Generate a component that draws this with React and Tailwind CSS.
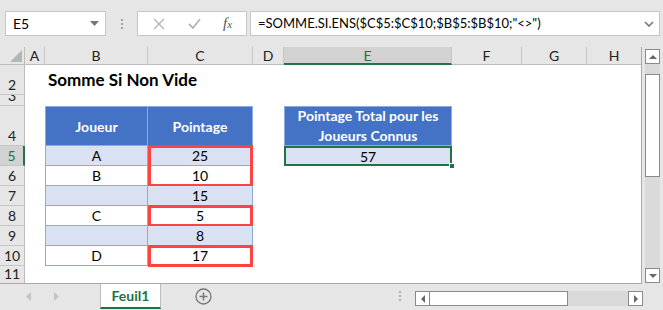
import React from 'react';

const font = { fontFamily: 'Lato, "Open Sans", sans-serif' };

const cols = ['A', 'B', 'C', 'D', 'E', 'F', 'G', 'H'];
const rowNums = [2, 3, 4, 5, 6, 7, 8, 9, 10, 11];

const rowStart = ['row-start-2', 'row-start-3', 'row-start-4', 'row-start-5', 'row-start-6', 'row-start-7', 'row-start-8', 'row-start-9', 'row-start-10', 'row-start-11'];
const colStart = ['col-start-2', 'col-start-3', 'col-start-4', 'col-start-5', 'col-start-6', 'col-start-7', 'col-start-8', 'col-start-9'];

const data = [
    { joueur: 'A', score: 25, band: true },
    { joueur: 'B', score: 10, band: false },
    { joueur: '', score: 15, band: true },
    { joueur: 'C', score: 5, band: false },
    { joueur: '', score: 8, band: true },
    { joueur: 'D', score: 17, band: false },
];

// rows whose score is counted get the red frame
const redRows = [5, 6, 8, 10];

const FormulaBar = () => (
    <div className="h-[47px] bg-[#e6e6e6] flex items-start pt-[11px] pl-[5px]">
        <div className="w-[101px] h-[25px] bg-white border border-[#c6c6c6] flex items-center justify-between pl-[7px] pr-[6px] text-[14px] text-black">
            <span>E5</span>
            <svg width="9" height="5" viewBox="0 0 9 5"><path d="M0 0h9L4.5 5z" fill="#777" /></svg>
        </div>
        <div className="w-[31px] h-[25px] flex flex-col items-center justify-center gap-[2px]">
            <span className="w-[2px] h-[2px] bg-[#a6a6a6]" />
            <span className="w-[2px] h-[2px] bg-[#a6a6a6]" />
            <span className="w-[2px] h-[2px] bg-[#a6a6a6]" />
        </div>
        <div className="w-[110px] h-[25px] bg-white border border-[#c6c6c6] flex items-center">
            <svg className="ml-[15px]" width="12" height="12" viewBox="0 0 12 12">
                <path d="M1 1l10 10M11 1L1 11" stroke="#b5b5b5" strokeWidth="1.4" />
            </svg>
            <svg className="ml-[23px]" width="13" height="11" viewBox="0 0 13 11">
                <path d="M1 6l4 4 7-9" stroke="#b5b5b5" strokeWidth="1.8" fill="none" />
            </svg>
            <span className="ml-[22px] text-[15px] italic text-[#555]" style={{ fontFamily: '"Liberation Serif", serif' }}>
                f<span className="text-[11px]">x</span>
            </span>
        </div>
        <div className="ml-[3px] flex-1 mr-[3px] h-[25px] bg-white border border-[#c6c6c6] flex items-center justify-between pl-[7px] pr-[5px] text-[13px] text-black whitespace-nowrap">
            <span>=SOMME.SI.ENS($C$5:$C$10;$B$5:$B$10;"&lt;&gt;")</span>
            <svg width="10" height="6" viewBox="0 0 10 6"><path d="M1 1l4 4 4-4" stroke="#777" strokeWidth="1.6" fill="none" /></svg>
        </div>
    </div>
);

const ScrollButton = ({ dir }) => {
    const paths = {
        up: 'M1 5h8L5 1z',
        down: 'M1 1h8L5 5z',
        left: 'M5 1v8L1 5z',
        right: 'M1 1v8l4-4z',
    };
    const horizontal = dir === 'left' || dir === 'right';
    return (
        <div className="w-[15px] h-[15px] bg-white border border-[#8a8a8a] flex items-center justify-center shrink-0">
            <svg width={horizontal ? 6 : 10} height={horizontal ? 10 : 6} viewBox={horizontal ? '0 0 6 10' : '0 0 10 6'}>
                <path d={paths[dir]} fill="#666" />
            </svg>
        </div>
    );
};

const Sheet = () => {
    const tblBorder = 'border-[#8ea9db]';
    return (
        <div className="relative w-[642px] h-[237px] bg-white border-r border-b border-[#aaaaaa] grid grid-cols-[25px_20px_103px_105px_31px_168px_70px_65px_55px] grid-rows-[18px_30px_11px_40px_20px_20px_20px_20px_20px_20px_18px] overflow-hidden">
            {/* corner */}
            <div className="col-start-1 row-start-1 bg-[#e6e6e6] border-r border-b border-[#bdbdbd] flex items-end justify-end p-[2px]">
                <svg width="12" height="12" viewBox="0 0 12 12"><path d="M12 0v12H0z" fill="#b5b5b5" /></svg>
            </div>
            {/* column headers */}
            {cols.map((c, i) => (
                <div
                    key={c}
                    className={`${colStart[i]} row-start-1 flex items-center justify-center text-[14px] ${c === 'E'
                        ? 'bg-[#d2d2d2] text-[#217346] border-b-2 border-b-[#217346] border-r border-r-[#c6c6c6]'
                        : 'bg-[#e6e6e6] text-[#222] border-b border-b-[#bdbdbd] border-r border-r-[#c6c6c6]'
                        }`}
                >
                    {c}
                </div>
            ))}
            {/* row headers */}
            {rowNums.map((n, i) => (
                <div
                    key={n}
                    className={`col-start-1 ${rowStart[i]} flex items-end justify-center text-[14px] leading-[18px] overflow-hidden ${n === 5
                        ? 'bg-[#d2d2d2] text-[#217346] border-r-2 border-r-[#217346] border-b border-b-[#c6c6c6]'
                        : 'bg-[#e6e6e6] text-[#222] border-r border-r-[#bdbdbd] border-b border-b-[#c6c6c6]'
                        }`}
                >
                    {n}
                </div>
            ))}

            {/* title */}
            <div className="col-start-3 col-span-2 row-start-2 flex items-end pl-[3px] pb-[3px] text-[17px] font-bold text-black whitespace-nowrap">
                Somme Si Non Vide
            </div>

            {/* table header */}
            <div className={`col-start-3 row-start-4 bg-[#4472c4] border-l border-t border-r border-b ${tblBorder} flex items-center justify-center text-white font-bold text-[14px]`}>
                Joueur
            </div>
            <div className={`col-start-4 row-start-4 bg-[#4472c4] border-t border-r border-b ${tblBorder} flex items-center justify-center text-white font-bold text-[14px]`}>
                Pointage
            </div>

            {data.map((d, i) => {
                const r = rowStart[i + 3];
                const bg = d.band ? 'bg-[#d9e1f2]' : 'bg-white';
                const framed = redRows.includes(i + 5);
                return (
                    <React.Fragment key={i}>
                        <div className={`col-start-3 ${r} ${bg} border-l border-r border-b ${tblBorder} flex items-center justify-center text-[14px] text-black`}>
                            {d.joueur}
                        </div>
                        <div className={`relative col-start-4 ${r} ${bg} border-r border-b ${tblBorder} flex items-center justify-center text-[14px] text-black`}>
                            {d.score}
                            {framed && (
                                <div
                                    className={`absolute left-0 right-[-1px] border-[#ff4242] ${i === 0
                                        ? 'top-[-1px] bottom-[-1px] border-t-[3px] border-l-[3px] border-r-[3px]'
                                        : i === 1
                                            ? 'top-[-1px] bottom-[-2px] border-b-[3px] border-l-[3px] border-r-[3px]'
                                            : 'top-[-1px] bottom-[-2px] border-[3px]'
                                        }`}
                                />
                            )}
                        </div>
                    </React.Fragment>
                );
            })}

            {/* result */}
            <div className={`col-start-6 row-start-4 bg-[#4472c4] border ${tblBorder} flex items-center justify-center text-center text-white font-bold text-[14px] leading-[20px]`}>
                Pointage Total pour les<br />Joueurs Connus
            </div>
            <div className="relative col-start-6 row-start-5 bg-[#d9e1f2] flex items-center justify-center text-[14px] text-black">
                57
                <div className="absolute inset-0 border-2 border-[#217346]" />
                <div className="absolute right-[-3px] bottom-[-3px] w-[6px] h-[6px] bg-[#217346] border border-white" />
            </div>
        </div>
    );
};

const VScroll = () => (
    <div className="w-[21px] h-[237px] bg-[#e6e6e6] flex flex-col items-center pt-[2px] pb-[1px]">
        <ScrollButton dir="up" />
        <div className="w-[15px] flex-1 bg-[#dadada] flex flex-col mt-[0px]">
            <div className="mt-[10px] h-[103px] bg-white border border-[#8a8a8a]" />
        </div>
        <ScrollButton dir="down" />
    </div>
);

const TabBar = () => (
    <div className="h-[26px] bg-[#e6e6e6] flex items-start">
        <div className="w-[100px] h-[24px] flex items-center pl-[26px] gap-[23px]">
            <svg width="5" height="9" viewBox="0 0 5 9"><path d="M5 0v9L0 4.5z" fill="#c4c4c4" /></svg>
            <svg width="5" height="9" viewBox="0 0 5 9"><path d="M0 0v9l5-4.5z" fill="#c4c4c4" /></svg>
        </div>
        <div className="w-[61px] h-[25px] bg-white border-l border-r border-[#bdbdbd] border-b-2 border-b-[#217346] flex items-center justify-center text-[14px] font-bold text-[#217346]">
            Feuil1
        </div>
        <div className="ml-[34px] h-[24px] flex items-center">
            <svg width="17" height="17" viewBox="0 0 17 17">
                <circle cx="8.5" cy="8.5" r="7.5" fill="none" stroke="#777" strokeWidth="1.3" />
                <path d="M8.5 4.5v8M4.5 8.5h8" stroke="#777" strokeWidth="1.5" />
            </svg>
        </div>
        <div className="ml-[187px] h-[24px] flex flex-col items-center justify-center gap-[2px]">
            <span className="w-[2px] h-[2px] bg-[#b0b0b0]" />
            <span className="w-[2px] h-[2px] bg-[#b0b0b0]" />
            <span className="w-[2px] h-[2px] bg-[#b0b0b0]" />
        </div>
        <div className="ml-[14px] mt-[7px] w-[228px] h-[15px] flex bg-[#dadada]">
            <ScrollButton dir="left" />
            <div className="w-[138px] h-[15px] bg-white border border-[#8a8a8a] border-l-0" />
            <div className="flex-1" />
            <ScrollButton dir="right" />
        </div>
    </div>
);

const App = () => (
    <div className="w-[663px] h-[310px] overflow-hidden bg-[#e6e6e6]" style={font}>
        <FormulaBar />
        <div className="flex">
            <Sheet />
            <VScroll />
        </div>
        <TabBar />
    </div>
);

export default App;
